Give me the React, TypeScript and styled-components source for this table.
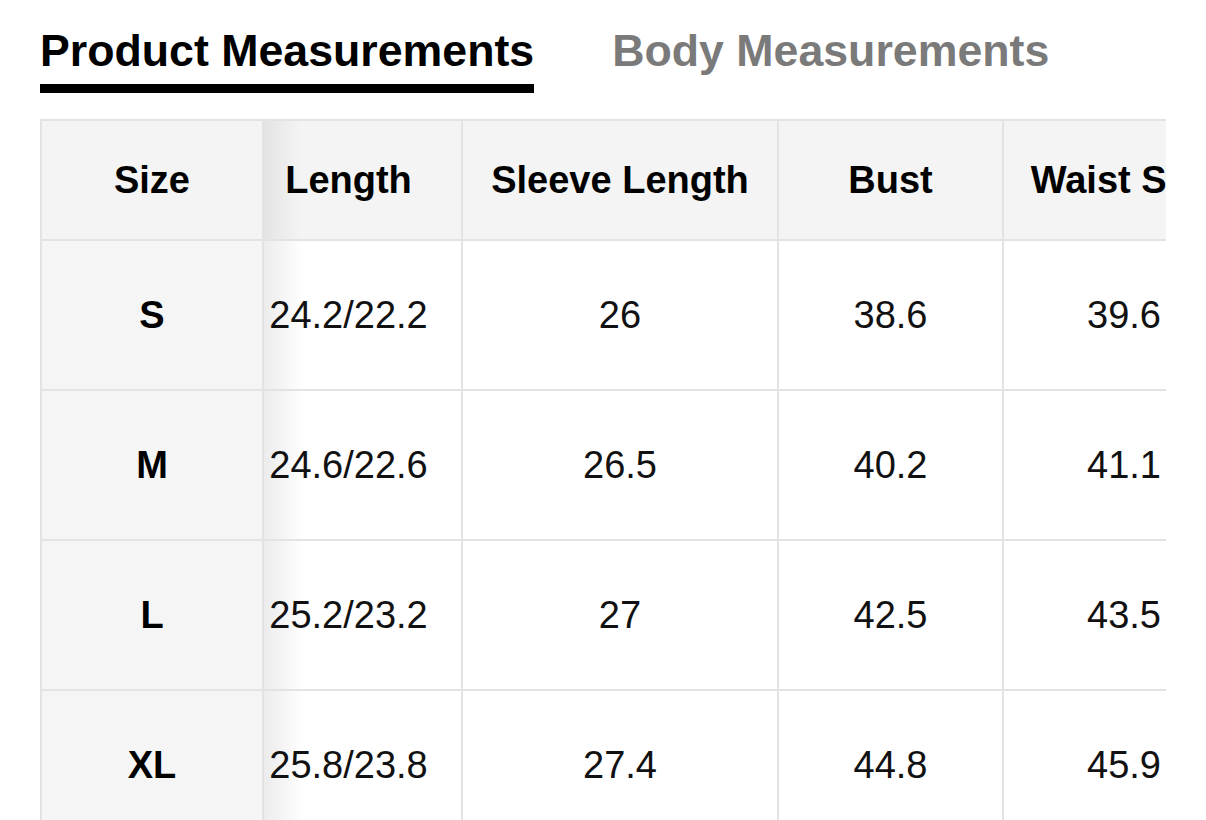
import styled, { createGlobalStyle } from "styled-components";

const GlobalStyle = createGlobalStyle`
  html, body {
    margin: 0;
    padding: 0;
    background: #fff;
    overflow: hidden;
  }
  body {
    font-family: "Liberation Sans", Arial, Helvetica, sans-serif;
    color: #111;
  }
`;

const columns = [
  { key: "size", label: "Size", width: 222 },
  { key: "length", label: "Length", width: 199, shift: 28, shade: true },
  { key: "sleeve", label: "Sleeve Length", width: 316 },
  { key: "bust", label: "Bust", width: 225 },
  { key: "waist", label: "Waist Size", width: 242 },
];

const rows = [
  ["S", "24.2/22.2", "26", "38.6", "39.6"],
  ["M", "24.6/22.6", "26.5", "40.2", "41.1"],
  ["L", "25.2/23.2", "27", "42.5", "43.5"],
  ["XL", "25.8/23.8", "27.4", "44.8", "45.9"],
];

const Page = styled.div`
  padding: 0 40px;
`;

const Tabs = styled.div`
  display: flex;
  gap: 78px;
  padding-top: 25px;
`;

const Tab = styled.div<{ $active?: boolean }>`
  font-size: 44.7px;
  line-height: 52px;
  font-weight: 700;
  color: ${({ $active }) => ($active ? "#000" : "#7a7a7a")};
  padding-bottom: 7px;
  border-bottom: 9px solid ${({ $active }) => ($active ? "#000" : "transparent")};
`;

const Scroller = styled.div`
  margin-top: 26px;
  width: 1126px;
  overflow: hidden;
`;

const Table = styled.table`
  border-collapse: collapse;
  table-layout: fixed;
  width: 1204px;
  font-size: 38px;
`;

const Col = styled.col<{ $width: number }>`
  width: ${({ $width }) => $width}px;
`;

const HeadCell = styled.th<{ $shift?: number; $shade?: boolean }>`
  height: 118px;
  padding: 0 ${({ $shift }) => $shift ?? 0}px 0 0;
  border: 2px solid #e3e3e3;
  background: ${({ $shade }) =>
    $shade ? "linear-gradient(to right, #e4e4e4 0, #f4f4f4 38px)" : "#f4f4f4"};
  font-weight: 700;
  color: #000;
  text-align: center;
  white-space: nowrap;
`;

const Cell = styled.td<{ $shift?: number; $shade?: boolean; $first?: boolean }>`
  height: 148px;
  padding: 0 ${({ $shift }) => $shift ?? 0}px 0 0;
  border: 2px solid #e3e3e3;
  background: ${({ $shade, $first }) =>
    $first
      ? "#f5f5f5"
      : $shade
      ? "linear-gradient(to right, #ececec 0, #ffffff 40px)"
      : "#fff"};
  font-weight: ${({ $first }) => ($first ? 700 : 400)};
  color: ${({ $first }) => ($first ? "#000" : "#111")};
  text-align: center;
  white-space: nowrap;
`;

export default function App() {
  return (
    <Page>
      <GlobalStyle />
      <Tabs>
        <Tab $active>Product Measurements</Tab>
        <Tab>Body Measurements</Tab>
      </Tabs>
      <Scroller>
        <Table>
          <colgroup>
            {columns.map((c) => (
              <Col key={c.key} $width={c.width} />
            ))}
          </colgroup>
          <thead>
            <tr>
              {columns.map((c) => (
                <HeadCell key={c.key} $shift={c.shift} $shade={c.shade}>
                  {c.label}
                </HeadCell>
              ))}
            </tr>
          </thead>
          <tbody>
            {rows.map((r) => (
              <tr key={r[0]}>
                {r.map((v, i) => (
                  <Cell
                    key={columns[i].key}
                    $first={i === 0}
                    $shift={columns[i].shift}
                    $shade={columns[i].shade}
                  >
                    {v}
                  </Cell>
                ))}
              </tr>
            ))}
          </tbody>
        </Table>
      </Scroller>
    </Page>
  );
}
